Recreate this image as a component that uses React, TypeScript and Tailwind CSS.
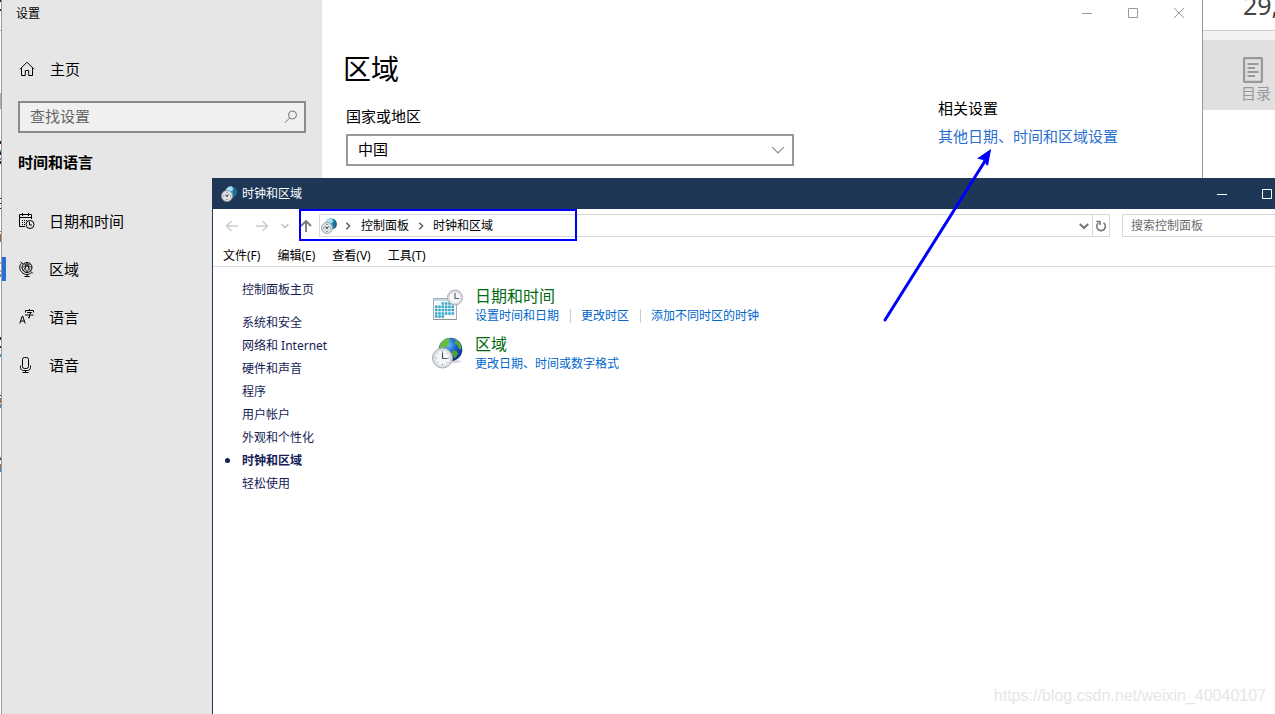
import React, { useState } from 'react';
import clsx from 'clsx';

const navItems = [
  { label: '日期和时间', icon: <CalendarIcon /> },
  { label: '区域', icon: <GlobeIcon /> },
  { label: '语言', icon: <LanguageIcon /> },
  { label: '语音', icon: <MicIcon /> },
];

const panelLinks = ['系统和安全', '网络和 Internet', '硬件和声音', '程序', '用户帐户', '外观和个性化', '时钟和区域', '轻松使用'];

const categories = [
  { title: '日期和时间', icon: <DateTimeIcon />, links: ['设置时间和日期', '更改时区', '添加不同时区的时钟'] },
  { title: '区域', icon: <RegionIcon />, links: ['更改日期、时间或数字格式'] },
];

const menus = ['文件(F)', '编辑(E)', '查看(V)', '工具(T)'];

function HomeIcon() {
  return (
    <svg width="16" height="16" viewBox="0 0 16 16" fill="none" stroke="#000" strokeWidth="1">
      <path d="M1 8.2 8 1.2l7 7M2.5 7v7.5h3.8V9.5h3.4v5h3.8V7" />
    </svg>
  );
}

function CalendarIcon() {
  return (
    <svg width="16" height="16" viewBox="0 0 16 16" fill="none" stroke="#000" strokeWidth="1">
      <path d="M6 13.500H.5v-12h12V6M.5 4.500h12M3.500 0v3M9.500 0v3" />
      <path d="M3 7.500h6M3 9.500h4M3 11.500h3" strokeDasharray="1 1" />
      <circle cx="11" cy="11.500" r="4" />
      <path d="M10.500 9v3h2.500" />
    </svg>
  );
}

function GlobeIcon() {
  return (
    <svg width="16" height="16" viewBox="0 0 16 16" fill="none" stroke="#000" strokeWidth="1">
      <circle cx="8" cy="6.500" r="5" />
      <g strokeWidth=".8">
        <path d="M4.500 3c2.500 0 6 3 7 7M11.500 3c-2.500 0-6 3-7 7M3 6.500c3-2 7-2 10 0M8 1.500c-2 3-2 7 0 10M8 1.500c2 3 2 7 0 10" />
      </g>
      <path d="M1.500.8 4 3M2 2.500c-2 3-1.500 6.500 1 9 2.800 2.600 7 2.600 9.800 0M12 10.500l1.800 1.800M8 13.500v2M5.500 15.500h5" />
    </svg>
  );
}

function LanguageIcon() {
  return (
    <svg width="16" height="16" viewBox="0 0 16 16" fill="none" stroke="#000" strokeWidth="1">
      <path d="M.8 14.500 3.300 7h.4l2.500 7.500M1.800 12h3.500" />
      <path d="M10.500 0v1.500M6.500 3.500v-2h8v2M8 3.500h4.500l-2 2v3.200H9M6 6h8.500" />
    </svg>
  );
}

function MicIcon() {
  return (
    <svg width="16" height="16" viewBox="0 0 16 16" fill="none" stroke="#000" strokeWidth="1">
      <rect x="3.500" y=".5" width="6" height="11" rx="2" />
      <path d="M1.500 8.500v2c0 2 1.500 3 3 3h4c1.500 0 3-1 3-3v-2M6.500 13.500v2M3.500 15.500h6" />
    </svg>
  );
}

function SearchIcon() {
  return (
    <svg width="14" height="14" viewBox="0 0 14 14" fill="none" stroke="#777" strokeWidth="1">
      <circle cx="8.500" cy="5" r="4" />
      <path d="M5.600 8 1 12.700" />
    </svg>
  );
}

// 时钟和区域的小图标，标题栏和地址栏共用
function ClockRegionIcon() {
  return (
    <svg width="16" height="16" viewBox="0 0 16 16">
      <circle cx="10" cy="6" r="5.800" fill="#2f8fb5" />
      <path d="M4.500 4.500C5.500 1.800 8 .3 10.500.3l2 3.200-3.500 2.500z" fill="#a9dcef" />
      <path d="M12.500 1c3 1.500 4 5 2.500 8.500l-2.500 1z" fill="#176a93" />
      <circle cx="6" cy="10" r="5.500" fill="#dde1e4" stroke="#8f979d" strokeWidth=".8" />
      <path d="M6 6v1M6 13v1M2.200 10h1M9 10h1M6 10 4 8.500M6 10l2-2" stroke="#44505a" strokeWidth=".9" />
      <circle cx="6" cy="10" r="1" fill="#44505a" />
    </svg>
  );
}

function DateTimeIcon() {
  return (
    <svg width="32" height="32" viewBox="0 0 32 32">
      <path d="M1.500 9.500h23v21h-23z" fill="#f7f9fa" stroke="#a3adb3" />
      <path d="M2 10h22v2H2z" fill="#b9dce9" />
      <path d="M1 30.500h24" stroke="#8b9398" />
      <g stroke="#35a8c9" strokeWidth="2.500" strokeDasharray="2.500 .8">
        <path d="M9.600 14.500h12.400M3 17.800h19.500M3 21.100h19.500M3 24.400h19.500M3 27.500h9.500" />
      </g>
      <circle cx="23" cy="8.500" r="7.500" fill="#dfe2e5" stroke="#a6abb0" />
      <circle cx="23" cy="8.500" r="5.800" fill="#f6f7f8" stroke="#c9cdd0" strokeWidth=".6" />
      <path d="M23 4v5.500h4" fill="none" stroke="#5a646c" strokeWidth="1.200" />
    </svg>
  );
}

function RegionIcon() {
  return (
    <svg width="32" height="32" viewBox="0 0 32 32">
      <defs>
        <radialGradient id="ocean" cx=".4" cy=".3" r=".75">
          <stop offset="0" stopColor="#6cc0f5" />
          <stop offset=".45" stopColor="#1b62cf" />
          <stop offset="1" stopColor="#0a2a80" />
        </radialGradient>
      </defs>
      <ellipse cx="22" cy="24.500" rx="7" ry="1.500" fill="#d3d6d8" />
      <circle cx="18.500" cy="12.500" r="11.800" fill="url(#ocean)" />
      <path d="M9 6c2-3 5-4.500 8-5l1 2-2 2 1 2-3 3-3 1-1 3-2-1c-.6-3-.3-5 1-7z" fill="#6dbb3c" />
      <path d="M22 2c4 1 6.500 4 7.500 8l-1 3-2-2-1-3-3-1 1-3z" fill="#58a83a" />
      <path d="M21 13l4 1.500 1 2.500-3 4.500-2-2.500-1.500-3.500z" fill="#4fa040" />
      <circle cx="10.500" cy="21" r="10" fill="#dfe3e6" stroke="#a3a9ad" />
      <circle cx="10.500" cy="21" r="7.800" fill="#f5f6f7" stroke="#c4c9cc" strokeWidth=".6" />
      <path d="M10.500 14v1.500M10.500 26.500V28M3.800 21h1.500M15.700 21h1.500M5.800 16.300l.8.8M15.200 16.300l-.8.8M5.800 25.700l.8-.8M15.200 25.700l-.8-.8" stroke="#9aa1a6" />
      <path d="M10.500 15.500V21.500h5" fill="none" stroke="#4d575e" strokeWidth="1.200" />
    </svg>
  );
}

function Chevron({ size, className }: { size: number; className?: string }) {
  return (
    <svg width={size} height={size} viewBox="0 0 12 12" fill="none" stroke="currentColor" className={className}>
      <path d="M1 3.500 6 8.500l5-5" />
    </svg>
  );
}

// 浏览器窗口露出来的一像素边
function PageEdge() {
  return (
    <svg width="1" height="480" shapeRendering="crispEdges" className="shrink-0">
      <path d="M.5 0v2M.5 9v2M.5 141v3M.5 152v3M.5 161v3M.5 198v1M.5 203v1M.5 208v1M.5 337v3M.5 346v2M.5 395v1M.5 459v1" stroke="#223" />
      <path d="M.5 30v1M.5 93v16M.5 262v2M.5 270v2" stroke="#aab" />
      <path d="M.5 150v2M.5 158v2M.5 231v1M.5 274v3M.5 354v3M.5 404v4M.5 467v5" stroke="#3b8fd0" />
      <path d="M.5 234v8M.5 398v5M.5 457v2M.5 464v3" stroke="#a8662a" />
    </svg>
  );
}

function SettingsWindow() {
  const [active, setActive] = useState('区域');
  const [keyword, setKeyword] = useState('');

  return (
    <div className="flex flex-1 border-x border-[#999] bg-white text-[15px] leading-5 text-black">
      <aside className="w-80 shrink-0 bg-[#e6e6e6]">
        <div className="flex h-7 items-center pl-3.5 text-xs">设置</div>
        <a href="#" className="mt-[17px] flex h-12 items-center gap-[15px] pl-[17px]">
          <HomeIcon />
          主页
        </a>
        <div className="mx-4 mt-2 flex h-8 items-center border-2 border-[#8a8a8a] bg-[#f0f0f0] pr-1.5">
          <input
            aria-label="查找设置"
            placeholder="查找设置"
            value={keyword}
            onChange={(e) => setKeyword(e.target.value)}
            className="h-full min-w-0 flex-1 pb-0.5 pl-2.5 outline-none placeholder:text-[#666]"
          />
          <button aria-label="搜索"><SearchIcon /></button>
        </div>
        <h2 className="flex h-[58px] items-center pl-4 font-bold">时间和语言</h2>
        <nav className="mt-1.5">
          {navItems.map((item) => (
            <button
              key={item.label}
              onClick={() => setActive(item.label)}
              className="flex h-12 w-full items-center"
            >
              <span className={clsx('h-6 w-1', active === item.label && 'bg-[#2a6fd6]')} />
              <span className="flex items-center gap-3.5 pl-[13px]">
                {item.icon}
                {item.label}
              </span>
            </button>
          ))}
        </nav>
      </aside>

      <main className="min-w-0 flex-1">
        <div className="flex h-[26px] justify-end">
          <button aria-label="最小化" className="flex w-[46px] items-center justify-center">
            <svg width="10" height="10" stroke="#999"><path d="M0 5.500h10" /></svg>
          </button>
          <button aria-label="最大化" className="flex w-[46px] items-center justify-center">
            <svg width="10" height="10" stroke="#999" fill="none"><path d="M.5.5h9v9h-9z" /></svg>
          </button>
          <button aria-label="关闭" className="flex w-[46px] items-center justify-center">
            <svg width="10" height="10" stroke="#999"><path d="M0 0l10 10M10 0 0 10" /></svg>
          </button>
        </div>
        <div className="flex gap-36">
          <div className="w-[472px]">
            <h1 className="mt-[23px] pl-[21px] text-[28px] leading-10">区域</h1>
            <label htmlFor="country" className="mt-[17px] block pl-6">国家或地区</label>
            <div className="relative mt-2 ml-6">
              <select id="country" className="h-8 w-full appearance-none border-2 border-[#999] bg-white pb-0.5 pl-2.5">
                <option>中国</option>
              </select>
              <Chevron size={14} className="pointer-events-none absolute top-[9px] right-[9px] text-[#888]" />
            </div>
          </div>
          <div className="mt-[72px]">
            <h3>相关设置</h3>
            <a href="#" className="mt-2 block text-[#2a6fd0]">其他日期、时间和区域设置</a>
          </div>
        </div>
      </main>
    </div>
  );
}

// 右侧露出的网页
function ArticleEdge() {
  return (
    <div className="w-[72px] shrink-0 overflow-hidden bg-white">
      <div className="flex h-[31px] border-b border-[#ccc] pl-10 text-[25px] leading-[10px] text-[#444]">29,</div>
      <div className="h-[9px] bg-[#f2f2f2]" />
      <button className="flex h-[70px] w-full flex-col items-end bg-[#e0e0e0] pt-[17px] pr-1 text-[15px] leading-5 text-[#999]">
        <svg width="20" height="26" viewBox="0 0 20 26" fill="none" stroke="#999" strokeWidth="2" className="mr-2">
          <rect x="1" y="1" width="18" height="24" rx="1.500" strokeWidth="2.400" />
          <path d="M4.500 7h11M4.500 11h7.500M4.500 15h11M4.500 19h7.500" />
        </svg>
        目录
      </button>
    </div>
  );
}

function ControlPanelWindow() {
  return (
    <div className="absolute top-[178px] -right-3.5 bottom-0 left-[212px] border-l border-[#1f3757] bg-white text-xs text-black">
      <header className="flex h-[31px] items-center bg-[#1f3757] pl-2 text-white">
        <ClockRegionIcon />
        <span className="ml-[5px] flex-1">时钟和区域</span>
        <button aria-label="最小化" className="flex h-full w-[45px] items-center justify-center">
          <svg width="10" height="10" stroke="#fff"><path d="M0 5.500h10" /></svg>
        </button>
        <button aria-label="最大化" className="flex h-full w-[45px] items-center justify-center">
          <svg width="10" height="10" stroke="#fff" fill="none"><path d="M.5.5h9v9h-9z" /></svg>
        </button>
      </header>

      <div className="relative flex h-[33px] items-center pl-3">
        <button aria-label="后退" className="mr-4 text-[#ccc]">
          <svg width="14" height="12" viewBox="0 0 14 12" fill="none" stroke="currentColor" strokeWidth="1.500"><path d="M13 6H1.500M6.500 1l-5 5 5 5" /></svg>
        </button>
        <button aria-label="前进" className="mr-3 text-[#ccc]">
          <svg width="14" height="12" viewBox="0 0 14 12" fill="none" stroke="currentColor" strokeWidth="1.500"><path d="M1 6h11.500M7.500 1l5 5-5 5" /></svg>
        </button>
        <button aria-label="最近浏览的位置" className="mr-2.5 text-[#bbb]"><Chevron size={8} className="stroke-2" /></button>
        <button aria-label="上移" className="mr-1.5 text-[#777]">
          <svg width="14" height="14" viewBox="0 0 14 14" fill="none" stroke="currentColor" strokeWidth="1.800"><path d="M7 13V2M2 7l5-5 5 5" /></svg>
        </button>
        <div className="flex h-[23px] flex-1 items-center border border-[#d9d9d9] pl-px">
          <ClockRegionIcon />
          <Chevron size={8} className="ml-[7px] -rotate-90 stroke-2 text-[#555]" />
          <button className="ml-[9px]">控制面板</button>
          <Chevron size={8} className="ml-2 -rotate-90 stroke-2 text-[#555]" />
          <button className="ml-2">时钟和区域</button>
          <button aria-label="历史记录" className="mr-[3px] ml-auto text-[#777]"><Chevron size={10} className="stroke-[2.5]" /></button>
          <button aria-label="刷新" className="flex h-full w-[17px] items-center justify-center border-l border-[#d9d9d9]">
            <svg width="12" height="12" viewBox="0 0 12 12" fill="none" stroke="#777" strokeWidth="1.600">
              <path d="M8.500 2.800A4.300 4.300 0 1 1 3.400 3M1.300 1.500h3.700v3.500" />
            </svg>
          </button>
        </div>
        <input
          aria-label="搜索控制面板"
          placeholder="搜索控制面板"
          className="ml-3 h-[23px] w-[167px] border border-[#d9d9d9] pl-2 outline-none placeholder:text-[#6d6d6d]"
        />
        {/* 标注框 */}
        <div className="pointer-events-none absolute top-0 left-[86px] h-8 w-[278px] border-2 border-[#0000fa]" />
      </div>

      <div className="flex h-[25px] items-center gap-[17px] border-b border-[#d9d9d9] pt-[3px] pl-2.5">
        {menus.map((m) => (
          <button key={m}>{m}</button>
        ))}
      </div>

      <div className="flex">
        <nav className="w-[219px] shrink-0 pt-[11px] text-[#151c55]">
          <a href="#" className="block pl-[29px] leading-[23px]">控制面板主页</a>
          <ul className="mt-2.5">
            {panelLinks.map((link) => (
              <li key={link} className="flex h-[23px] items-center">
                <span className={clsx('mr-3 ml-3 size-[5px] rounded-full', link === '时钟和区域' && 'bg-[#151c55]')} />
                <a href="#" className={clsx(link === '时钟和区域' && 'font-bold')}>{link}</a>
              </li>
            ))}
          </ul>
        </nav>
        <div className="space-y-3 pt-[19px]">
          {categories.map((c) => (
            <div key={c.title} className="flex h-9 gap-[11px]">
              <div className="pt-[3px]">{c.icon}</div>
              <div>
                <a href="#" className="block text-base leading-5 text-[#006b12]">{c.title}</a>
                <div className="flex h-5 items-center text-[#0066cc]">
                  {c.links.map((l, i) => (
                    <a key={l} href="#" className={clsx('leading-[14px]', i > 0 && 'ml-[11px] border-l border-[#ccc] pl-2.5')}>{l}</a>
                  ))}
                </div>
              </div>
            </div>
          ))}
        </div>
      </div>
    </div>
  );
}

export default function App() {
  return (
    <div className="relative flex min-h-screen overflow-hidden bg-white font-['Noto_Sans','Noto_Sans_CJK_SC',sans-serif]">
      <PageEdge />
      <SettingsWindow />
      <ArticleEdge />
      <ControlPanelWindow />

      {/* 箭头标注，指向相关设置里的链接 */}
      <svg width="112" height="176" viewBox="0 0 112 176" className="pointer-events-none absolute top-[147px] left-[882px]">
        <path d="M3 173 103 14" stroke="#0000fa" strokeWidth="3" strokeLinecap="round" />
        <path d="M109 2 95 11.500l6 1.500 4 5.500z" fill="#0000fa" />
        <path d="M109 2 101 12l5 7z" fill="#0000fa" />
      </svg>
      <p className="absolute right-[9px] bottom-1.5 font-['Liberation_Sans',sans-serif] text-base text-[#e6e6e6]">
        https://blog.csdn.net/weixin_40040107
      </p>
    </div>
  );
}
